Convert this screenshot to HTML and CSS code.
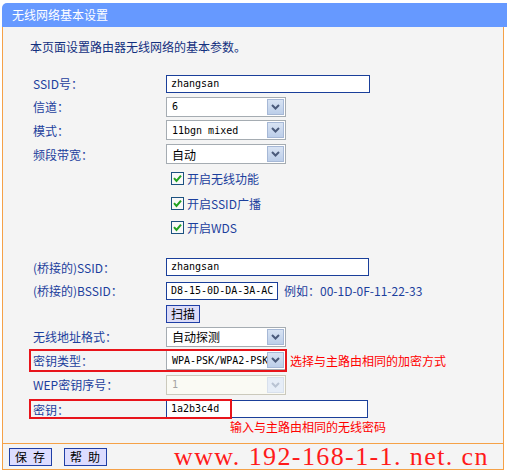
FILE: index.html
```html
<!DOCTYPE html>
<html lang="zh-CN">
<head>
  <meta charset="UTF-8" />
  <title>无线网络基本设置</title>
  <link rel="stylesheet" href="styles.css">
</head>
<body>
  <div class="page">
    <div class="title">无线网络基本设置</div>
    <div class="panel">
      <div class="content">
        <p class="intro">本页面设置路由器无线网络的基本参数。</p>

        <div class="form">
          <div class="row short">
            <label>SSID号：</label>
            <div class="input mono w204">zhangsan</div>
          </div>
          <div class="row short">
            <label>信道：</label>
            <div class="select"><span class="value mono">6</span><span class="arrow"><svg width="9" height="6" viewBox="0 0 9 6"><path d="M1 1 L4.5 4.5 L8 1" fill="none" stroke="#4b5b7b" stroke-width="2"/></svg></span></div>
          </div>
          <div class="row">
            <label>模式：</label>
            <div class="select"><span class="value mono">11bgn mixed</span><span class="arrow"><svg width="9" height="6" viewBox="0 0 9 6"><path d="M1 1 L4.5 4.5 L8 1" fill="none" stroke="#4b5b7b" stroke-width="2"/></svg></span></div>
          </div>
          <div class="row">
            <label>频段带宽：</label>
            <div class="select"><span class="value">自动</span><span class="arrow"><svg width="9" height="6" viewBox="0 0 9 6"><path d="M1 1 L4.5 4.5 L8 1" fill="none" stroke="#4b5b7b" stroke-width="2"/></svg></span></div>
          </div>
          <div class="row tall">
            <label></label>
            <div class="check">
              <svg width="13" height="13" viewBox="0 0 13 13"><rect x="0.5" y="0.5" width="12" height="12" fill="#f8f8f8" stroke="#1c5180"/><path d="M3 6.2 L5.5 9 L10 3.6" fill="none" stroke="#21a121" stroke-width="2"/></svg>
              <span>开启无线功能</span>
            </div>
          </div>
          <div class="row">
            <label></label>
            <div class="check">
              <svg width="13" height="13" viewBox="0 0 13 13"><rect x="0.5" y="0.5" width="12" height="12" fill="#f8f8f8" stroke="#1c5180"/><path d="M3 6.2 L5.5 9 L10 3.6" fill="none" stroke="#21a121" stroke-width="2"/></svg>
              <span>开启SSID广播</span>
            </div>
          </div>
          <div class="row">
            <label></label>
            <div class="check">
              <svg width="13" height="13" viewBox="0 0 13 13"><rect x="0.5" y="0.5" width="12" height="12" fill="#f8f8f8" stroke="#1c5180"/><path d="M3 6.2 L5.5 9 L10 3.6" fill="none" stroke="#21a121" stroke-width="2"/></svg>
              <span>开启WDS</span>
            </div>
          </div>

          <div class="gap"></div>

          <div class="row">
            <label>(桥接的)SSID：</label>
            <div class="input mono w203">zhangsan</div>
          </div>
          <div class="row short">
            <label>(桥接的)BSSID：</label>
            <div class="input mono w112">D8-15-0D-DA-3A-AC</div>
            <span class="example">例如：00-1D-0F-11-22-33</span>
          </div>
          <div class="row short">
            <label></label>
            <button class="scan">扫描</button>
          </div>
          <div class="row short">
            <label>无线地址格式：</label>
            <div class="select"><span class="value">自动探测</span><span class="arrow"><svg width="9" height="6" viewBox="0 0 9 6"><path d="M1 1 L4.5 4.5 L8 1" fill="none" stroke="#4b5b7b" stroke-width="2"/></svg></span></div>
          </div>
          <div class="row marked">
            <label>密钥类型：</label>
            <div class="select"><span class="value mono">WPA-PSK/WPA2-PSK</span><span class="arrow"><svg width="9" height="6" viewBox="0 0 9 6"><path d="M1 1 L4.5 4.5 L8 1" fill="none" stroke="#4b5b7b" stroke-width="2"/></svg></span></div>
            <span class="hint">选择与主路由相同的加密方式</span>
            <div class="mark mark-type"></div>
          </div>
          <div class="row tall">
            <label>WEP密钥序号：</label>
            <div class="select disabled"><span class="value mono">1</span><span class="arrow"><svg width="9" height="6" viewBox="0 0 9 6"><path d="M1 1 L4.5 4.5 L8 1" fill="none" stroke="#b9c3d3" stroke-width="2"/></svg></span></div>
          </div>
          <div class="row marked">
            <label>密钥：</label>
            <div class="input mono w202">1a2b3c4d</div>
            <div class="mark mark-key"></div>
          </div>
          <p class="hint hint-key">输入与主路由相同的无线密码</p>
        </div>
      </div>

      <div class="footer">
        <button class="btn">保存</button>
        <button class="btn">帮助</button>
        <span class="watermark">www. 192-168-1-1. net. cn</span>
      </div>
    </div>
  </div>
</body>
</html>
```

FILE: styles.css
```css
* {
  box-sizing: border-box;
  margin: 0;
  padding: 0;
}
body {
  font-family: "Noto Sans CJK SC", sans-serif;
  font-size: 12px;
  background: #fff;
}
.page {
  width: 505px;
  margin: 3px 0 0 2px;
}
.title {
  height: 24px;
  line-height: 24px;
  padding-left: 10px;
  background: #6699ff;
  color: #fff;
  border-top-left-radius: 5px;
}
.panel {
  width: 502px;
  background: #f4f4f4;
  border: 1px solid #f5a147;
  border-top: 0;
  overflow: hidden;
}
.content {
  height: 416px;
  padding: 12px 0 0 27px;
}
.intro {
  line-height: 16px;
  color: #13307f;
  margin-bottom: 17px;
}
.form {
  padding-left: 3px;
}
.row {
  position: relative;
  display: flex;
  align-items: center;
  height: 24px;
}
.row.short {
  height: 23px;
}
.row.tall {
  height: 25px;
}
.row label {
  flex: none;
  width: 133px;
  color: #1c3f9d;
  white-space: nowrap;
}
.gap {
  height: 16px;
}
.mono {
  font-family: "DejaVu Sans Mono", monospace;
  font-size: 10px;
}
.input {
  height: 18px;
  line-height: 16px;
  padding-left: 4px;
  background: #fff;
  border: 1px solid #1a3f9a;
  color: #000;
  white-space: nowrap;
}
.w204 { width: 204px; }
.w203 { width: 203px; }
.w202 { width: 202px; }
.w112 { width: 112px; }

.select {
  display: flex;
  align-items: center;
  width: 120px;
  height: 20px;
  padding: 1px;
  background: #fff;
  border: 1px solid #a5acb2;
}
.select .value {
  flex: 1;
  padding-left: 4px;
  overflow: hidden;
  white-space: nowrap;
  color: #000;
}
.select .arrow {
  flex: none;
  display: flex;
  align-items: center;
  justify-content: center;
  width: 17px;
  height: 16px;
  border: 1px solid #a6b8d6;
  background: linear-gradient(#d8e3f3, #bccee9);
}
.select.disabled {
  border-color: #cbc9bc;
  background: #fafaf4;
}
.select.disabled .value {
  color: #a3a3a3;
}
.select.disabled .arrow {
  border-color: #d8e0ec;
  background: #e6edf7;
}

.check {
  display: flex;
  align-items: center;
  margin-left: 5px;
  color: #1c3f9d;
}
.check svg {
  margin-right: 3px;
}
.example {
  margin-left: 6px;
  color: #1c3f9d;
}
.scan {
  width: 34px;
  height: 18px;
  font: 12px "Noto Sans CJK SC", sans-serif;
  line-height: 16px;
  background: #dcdcf8;
  border: 1px solid #1f3fa6;
  color: #000;
}
.hint {
  margin-left: 4px;
  color: #f00;
  white-space: nowrap;
}
.hint-key {
  margin-left: 197px;
  line-height: 12px;
  margin-top: 0;
}
/* red annotation boxes drawn over the form */
.mark {
  position: absolute;
  left: -4px;
  border: 2px solid #e8141b;
}
.mark-type {
  top: 1px;
  width: 258px;
  height: 23px;
}
.mark-key {
  top: 2px;
  width: 203px;
  height: 20px;
}

.footer {
  display: flex;
  align-items: center;
  height: 26px;
  padding-left: 6px;
  border-top: 1px solid #f5a147;
}
.btn {
  width: 43px;
  height: 18px;
  margin-right: 12px;
  padding-left: 5px;
  text-align: left;
  font: 12px "Noto Sans CJK SC", sans-serif;
  line-height: 16px;
  letter-spacing: 6px;
  background: #dcdcff;
  border: 1px solid #1f3fa6;
  color: #000;
}
.watermark {
  margin-left: 55px;
  font-family: "Liberation Serif", serif;
  font-size: 26px;
  line-height: 25px;
  letter-spacing: 1.4px;
  color: #ff1a1a;
  white-space: pre;
}
```
